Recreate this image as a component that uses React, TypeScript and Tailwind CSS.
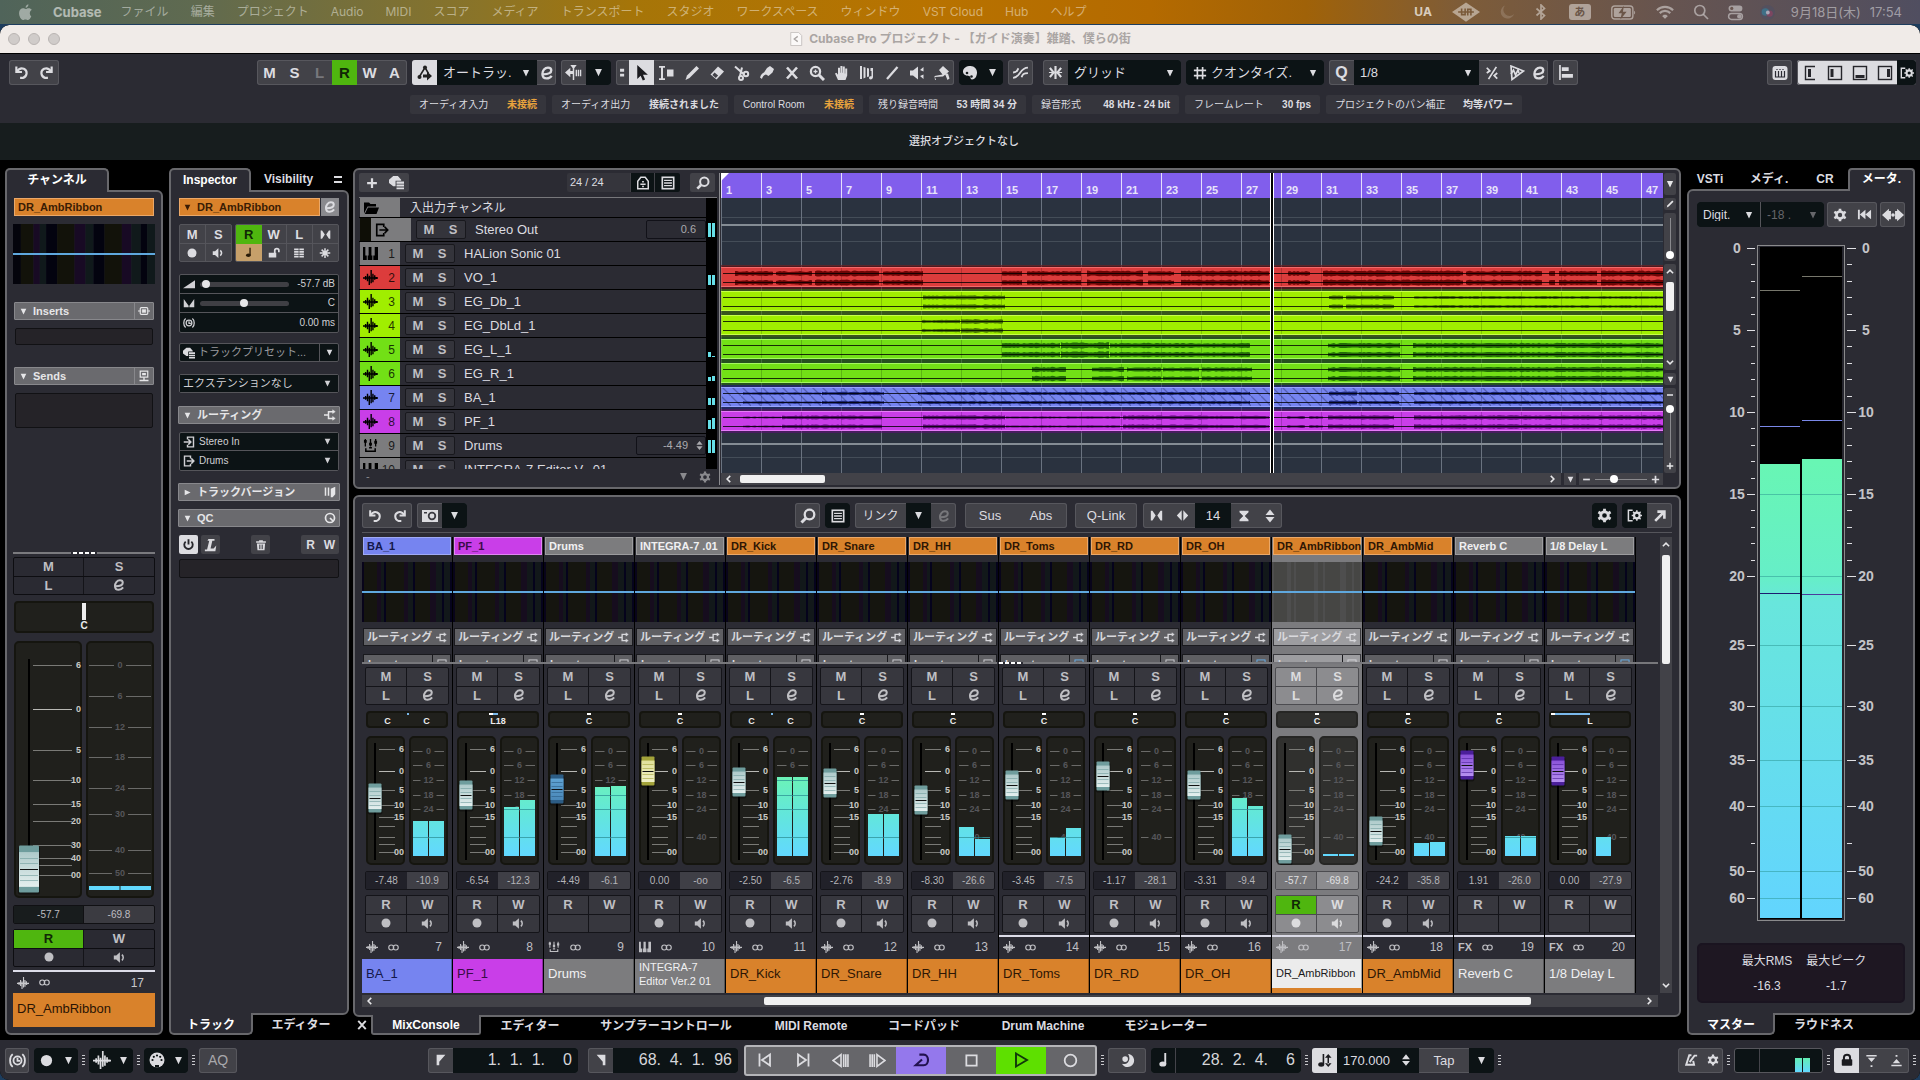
import React from "react";

/* ---------- icons (16 x 16 grid) ---------- */

const line = { fill: "none", stroke: "currentColor", strokeWidth: 2.3 } as const;
const thin = { fill: "none", stroke: "currentColor", strokeWidth: 1.4 } as const;

const ICONS: Record<string, React.ReactNode> = {
  undo: (
    <g {...line}>
      <path d="M2.500 1.500v6h6" />
      <path d="M3 7C5 4 8 3 10.500 4c4.200 1.800 4 8-1 9.800H6.500" />
    </g>
  ),
  redo: (
    <g {...line}>
      <path d="M13.500 1.500v6h-6" />
      <path d="M13 7C11 4 8 3 5.500 4c-4.200 1.800-4 8 1 9.800h3" />
    </g>
  ),
  e: (
    <path
      {...line}
      d="M4 9.300c3.500 0 8.300-1 8.300-4C12.300 3.400 10.600 2.600 9 2.600 5.800 2.600 3.400 5.800 3.400 9c0 2.900 1.800 4.400 4.300 4.400 2 0 3.800-.9 5-2.600"
    />
  ),
  down: <path d="M3 3h10l-5 10.500z" fill="currentColor" />,
  right: <path d="M3 3v10l10.500-5z" fill="currentColor" />,
  updown: <path d="M3.500 7L8 1.500 12.500 7zM3.500 9L8 14.500 12.500 9z" fill="currentColor" />,
  automation: (
    <g>
      <path d="M2.500 11.500L8 2.500l3.500 6" fill="none" stroke="currentColor" strokeWidth="1.600" />
      <circle cx="2.500" cy="12" r="2" fill="currentColor" />
      <circle cx="8" cy="2.500" r="2" fill="currentColor" />
      <path d="M6 9.500h4V6.500l5 4.500-5 4.500v-3H6z" fill="currentColor" />
    </g>
  ),
  autoscroll: (
    <g fill="currentColor">
      <path d="M0 8l5-4.500v3h3v3H5v3zM5 1h6L8.700 4v11H7.300V4z" />
      <path d="M10 5.500h1.300v6H10zM12 5.500h1.300v6H12zM14 5.500h1.300v6H14z" />
    </g>
  ),
  dots2: <path d="M5 3.500h5v3.500H5zM5 9.500h5V13H5z" fill="currentColor" />,
  arrow: <path d="M4 1v13l3.200-3 2 4.500 2.200-1-2-4.300H14z" fill="currentColor" />,
  range: (
    <g fill="currentColor">
      <path d="M0 1h6v1.700H4v10.600h2V15H0v-1.700h2V2.700H0z" />
      <path d="M8 4.500h6.500v7H8z" />
    </g>
  ),
  pencil: <path d="M12.500 1L15 3.500 5.500 13 1.500 15 3 10.500z" fill="currentColor" />,
  eraser: (
    <g>
      <path d="M9 1.500l6 5-7.500 8-6-5z" fill="currentColor" />
      <path d="M5.500 7.500l3.600 3-2.300 2.400-3.400-2.900z" fill="#43434a" />
    </g>
  ),
  scissors: (
    <g {...line} strokeWidth="2">
      <path d="M1 1.500L9.500 9M8 2.500L6 11" />
      <circle cx="12" cy="9" r="2.200" />
      <circle cx="7" cy="13" r="2" />
    </g>
  ),
  glue: <path d="M1 12.500c1-3 2-4 4-5L8 3l3-2 4 3-1.500 3.500L9.500 11 7 9.500C5 10 3.500 11.500 3 14z" fill="currentColor" />,
  cross: <path {...line} strokeWidth="2.600" d="M3 2.500l10 11M13 2.500L3 13.500" />,
  zoom: (
    <g {...line}>
      <circle cx="6.500" cy="6.500" r="4.600" />
      <path d="M10 10l5 5" strokeWidth="3" />
      <path d="M4.500 6.500h4M6.500 4.500v4" strokeWidth="1.300" />
    </g>
  ),
  hand: (
    <path
      d="M4 15l-3-6.500 1.500-.8 1.500 2V2.800h2v5h.4V1h2v6.800h.4V1.500h2V8.500h.4V3.500h2v7L11.500 15z"
      fill="currentColor"
    />
  ),
  warp: (
    <path d="M1 1h2v13H1zM4.500 2l2 .5v10l-2 1zM8 3l2 .5v8L8 12zM11.500 3h2.500v9c0 3-4 3-4 1 0-1.400 1-1.800 2.500-1.800V6h-1z" fill="currentColor" />
  ),
  linetool: <path {...line} d="M13.500 2L3 14" />,
  speaker: (
    <g fill="currentColor">
      <path d="M1 5.500h3L9 1.500v13L4 10.500H1z" />
      <path d="M11 5l3.500-3v4.500zM11 11l3.500 3V9.500z" />
    </g>
  ),
  bucket: <path d="M5 5l4-4 6 5.500-6 5L1 12l1 3H1L.5 11l8-1.500zM11 9l3-.5 1.500 5-2 1.500z" fill="currentColor" />,
  palette: (
    <g>
      <path d="M1 6.500C1 3 4.500 1 8.500 1S15 4 15 7.500c0 3-1.500 7-5 7-2 0-1-3-3-3.500S1 10.500 1 6.500z" fill="currentColor" />
      <circle cx="5" cy="8" r="1.300" fill="#1a1f20" />
      <circle cx="9.500" cy="11.500" r="1.300" fill="#1a1f20" />
    </g>
  ),
  crossfade: (
    <g {...line} strokeWidth="1.700">
      <path d="M1 13c7 0 6-9.500 14-9.500" />
      <path d="M1 8c4 0 4-2 5-4M9 12.500c1-3 2-4 6-4" />
    </g>
  ),
  snap: (
    <g {...line}>
      <path d="M8 1v14M2 3l4 5-4 5M14 3l-4 5 4 5" strokeWidth="2.300" />
      <path d="M1 8h14" strokeWidth="1.300" />
    </g>
  ),
  grid: <path {...line} strokeWidth="1.900" d="M5 1v14M11 1v14M1 5h14M1 11h14" />,
  percent: <path {...line} strokeWidth="2" d="M13 1L4 15M2 2l3.500 3.500L2 8M14 8l-3.500 3L14 14.500" />,
  quantwave: (
    <g {...line} strokeWidth="1.700">
      <path d="M2 1l12.500 5L3 14.500z" />
      <path d="M2 9l2.500-4 2 5L9 5l1 3" />
    </g>
  ),
  align: <path d="M2 1h1.600v14H2zM4.500 3H11v3.500H4.500zM4.500 9.500H15V13H4.500z" fill="currentColor" />,
  keyboard: (
    <g>
      <rect x="0.500" y="1" width="15" height="14" rx="3" fill="currentColor" />
      <path d="M3.500 6v6h9V6M6.500 6v6M9.500 6v6M5 4v1M8 4v1M11 4v1" stroke="#2b2b33" strokeWidth="1.200" fill="none" />
    </g>
  ),
  zoneL: (
    <g>
      <path d="M13 1.500H3.500v13H13" {...thin} />
      <path d="M6 4h3v8H6z" fill="currentColor" />
    </g>
  ),
  zoneA: (
    <g>
      <rect x="1.500" y="1.500" width="13" height="13" {...thin} />
      <path d="M3.500 4h3v8h-3z" fill="currentColor" />
    </g>
  ),
  zoneB: (
    <g>
      <rect x="1.500" y="1.500" width="13" height="13" {...thin} />
      <path d="M3.500 10h9v3h-9z" fill="currentColor" />
    </g>
  ),
  zoneC: (
    <g>
      <rect x="1.500" y="1.500" width="13" height="13" {...thin} />
      <path d="M10 4h3v8h-3z" fill="currentColor" />
    </g>
  ),
  panelgear: (
    <g>
      <path d="M6 2.500H1.500v11H6" {...line} strokeWidth="1.600" />
      <circle cx="10.500" cy="8" r="3" {...line} strokeWidth="2.300" />
      <path d="M10.500 2.500v2M10.500 11.500v2M5 8h2M14 8h2M6.500 4l1.500 1.500M13 10.500l1.500 1.500M14.500 4L13 5.500M8 10.500L6.500 12" stroke="currentColor" strokeWidth="1.600" />
    </g>
  ),
  gear: (
    <g>
      <circle cx="8" cy="8" r="4" {...line} strokeWidth="3" />
      <path
        d="M8 .8v3M8 12.200v3M1.500 4.300l2.600 1.500M11.900 10.200l2.600 1.500M1.500 11.700l2.600-1.500M11.900 5.800l2.600-1.500"
        stroke="currentColor"
        strokeWidth="3"
      />
    </g>
  ),
  plus: <path {...line} strokeWidth="3" d="M8 1.500v13M1.500 8h13" />,
  minus: <path {...line} strokeWidth="3" d="M2 8h12" />,
  preset: (
    <g fill="currentColor">
      <path d="M4.500 1h5L13 5v1H7v6H4.500L0 8.500V5z" />
      <path d="M8 7h8v2.200H8zM8 10.200h8v2H8zM8 13.200h8v2H8z" />
    </g>
  ),
  visible: (
    <g>
      <path d="M2 14.500V6l3.500-4.500h5L14 6v8.500z" {...line} strokeWidth="1.700" />
      <path d="M5 9.500h2M9 9.500h2M7 6.500h2M7 12h2M7 9.500h2" stroke="currentColor" strokeWidth="1.600" />
    </g>
  ),
  list: (
    <g>
      <rect x="1.500" y="1.500" width="13" height="13" {...line} strokeWidth="1.900" />
      <path d="M3.500 5h9M3.500 8h9M3.500 11h9" stroke="currentColor" strokeWidth="1.600" />
    </g>
  ),
  search: (
    <g {...line}>
      <circle cx="9.500" cy="6.500" r="4.800" />
      <path d="M6 10l-4.500 4.500" strokeWidth="3" />
    </g>
  ),
  folder: <path d="M1 13.500V2.500h5L7.500 4H13v2.500H4.500zM5 7.500h11L13.500 14H1.800z" fill="currentColor" />,
  out: (
    <g {...line} strokeWidth="1.900">
      <path d="M10 4.500V1.500H2v13h8v-3" />
      <path d="M5 8h9M11 4.500L14.500 8 11 11.500" />
    </g>
  ),
  in: (
    <g {...line} strokeWidth="1.900">
      <path d="M6 4.500V1.500h8v13H6v-3" />
      <path d="M1 8h9M7 4.500L10.500 8 7 11.500" />
    </g>
  ),
  keys: <path d="M0 1h2.500v9H4v5H0zM5 15v-5h1V1h3v9h1v5zM11 15v-5h1.500V1H16v14z" fill="currentColor" />,
  wave: (
    <path
      d="M0 8.500h16M2.800 6.500v4M4.800 4v8M6.700 6v10M8.700 0v14M10.600 4v9M12.500 5.500v5M14.200 7.500v2"
      fill="none"
      stroke="currentColor"
      strokeWidth="1.500"
    />
  ),
  faders: (
    <g>
      <path d="M2.500 1v8M8 1v8M13.500 1v8" {...thin} />
      <path d="M1 2h3v3H1zM6.500 5h3v3h-3zM12 3h3v3h-3z" fill="currentColor" />
      <path d="M3 11v3h10v-3M6.500 10.500h3" {...line} strokeWidth="1.600" />
    </g>
  ),
  rec: <circle cx="8" cy="8" r="6" fill="currentColor" />,
  monitor: (
    <g>
      <path d="M1 5.500h3L8.500 1.500v13L4 10.500H1z" fill="currentColor" />
      <path d="M11 4.500c2 2 2 5 0 7" {...line} strokeWidth="2" />
    </g>
  ),
  note: (
    <g fill="currentColor">
      <path d="M9.300 1h1.900v11H9.300z" />
      <ellipse cx="7.800" cy="12" rx="3.500" ry="2.600" />
    </g>
  ),
  lockopen: (
    <g>
      <path d="M1 7.500h10V14H1z" fill="currentColor" />
      <path d="M9 8V4.500c0-3 5.500-3 5.500 0V7" {...line} />
    </g>
  ),
  lock: (
    <g>
      <rect x="2" y="7" width="12" height="7.500" rx="1" fill="currentColor" />
      <path d="M4.500 8V5c0-4 7-4 7 0v3" {...line} />
    </g>
  ),
  lanes: <path d="M1.500 2h6v2.400h-6zM8.500 2h6v2.400h-6zM1.500 5.300h6v2.400h-6zM8.500 5.300h6v2.400h-6zM1.500 8.600h6V11h-6zM8.500 8.600h6V11h-6zM1.500 12h6v2h-6zM8.500 12h6v2h-6z" fill="currentColor" />,
  star: <path {...line} strokeWidth="2" d="M8 1.500v13M1 8h14M3.500 3.500l9 9M12.500 3.500l-9 9" />,
  bow: <path d="M1 2h2l4 6-4 6H1zM15 2h-2L9 8l4 6h2z" fill="currentColor" />,
  ramp: <path d="M0 13.500L16 3v10.500z" fill="currentColor" />,
  pan: <path d="M1 13.500V2.500l6.500 9v2zM15 13.500V2.500l-6.500 9v2z" fill="currentColor" />,
  delay: (
    <g {...line} strokeWidth="1.700">
      <circle cx="8" cy="8" r="3.800" />
      <path d="M8 5.500V8.400h2.500M3.500 2C.2 4.500.2 11.500 3.500 14M12.500 2c3.300 2.500 3.300 9.500 0 12" />
    </g>
  ),
  routing: (
    <g {...line} strokeWidth="2">
      <path d="M0 8h6M12 3.500H6v9h6" />
      <path d="M11.500 1L15 3.500 11.500 6zM11.500 10l3.500 2.500-3.500 2.500z" fill="currentColor" strokeWidth=".6" />
    </g>
  ),
  insert: (
    <g {...line} strokeWidth="1.600">
      <rect x="3" y="3.500" width="10" height="9" rx="1.500" />
      <path d="M0 8h3M13 8h3" />
      <path d="M5.500 6h5v4h-5z" fill="currentColor" strokeWidth=".5" />
    </g>
  ),
  send: (
    <g>
      <rect x="3" y="1.500" width="10" height="8" {...line} strokeWidth="1.600" />
      <path d="M5.500 4h5v3h-5z" fill="currentColor" />
      <path d="M8 9.500v4M2 14h12" {...line} strokeWidth="1.800" />
    </g>
  ),
  versions: <path d="M1 2h2v11H1zM5 2h2v11H5zM9 3.500L15 1v10l-3.500 4H9z" fill="currentColor" />,
  qc: (
    <g {...line}>
      <circle cx="8" cy="8" r="6" />
      <path d="M8 8l4 4" />
    </g>
  ),
  power: (
    <g {...line}>
      <path d="M4.500 4.500a5.200 5.200 0 1 0 7 0" />
      <path d="M8 1.500V8" />
    </g>
  ),
  learn: <path d="M5 1h7v2H9.500L7.500 12H11l3-3.500-1 6.500H1v-2h2.500L6 3H4z" fill="currentColor" />,
  trash: (
    <g>
      <path d="M1.500 3h4V1.500h5V3h4v2h-13zM2.500 6h11l-.8 9H3.300z" fill="currentColor" />
      <path d="M6 7.500v6M8 7.500v6M10 7.500v6" stroke="#43434a" strokeWidth="1" />
    </g>
  ),
  stereo: (
    <g {...line} strokeWidth="1.700">
      <circle cx="4.700" cy="8" r="3.600" />
      <circle cx="11.300" cy="8" r="3.600" />
    </g>
  ),
  camera: (
    <g>
      <path d="M0 2h16v12H0z" fill="currentColor" />
      <circle cx="10" cy="8" r="3.300" fill="none" stroke="#3c3c43" strokeWidth="1.800" />
      <path d="M2 4h3v1.500H2z" fill="#3c3c43" />
    </g>
  ),
  widen: <path d="M1 2h2l4 6-4 6H1zM15 2h-2L9 8l4 6h2z" fill="currentColor" />,
  narrow: <path d="M7 1.500v13L1 8zM9 1.500v13L15 8z" fill="currentColor" />,
  hourglass: <path d="M2 1h12v2L9 8l5 5v2H2v-2l5-5-5-5z" fill="currentColor" />,
  popout: <path {...line} strokeWidth="3" d="M2.500 13.500L12 4M5 3h8v8" />,
  rewind: <path d="M1 3h2v10H1zM9 3v10L3 8zM15 3v10L9 8z" fill="currentColor" />,
  stereoArrows: (
    <g fill="currentColor">
      <path d="M0 8l5-4.500v9zM16 8l-5-4.500v9zM5 5h1.500v6H5zM9.500 5H11v6H9.500z" />
      <circle cx="8" cy="8" r="1.300" />
    </g>
  ),
  midi: (
    <g>
      <circle cx="8" cy="8" r="7.500" fill="currentColor" />
      <g fill="#0c1314">
        <circle cx="3.500" cy="8" r="1.100" />
        <circle cx="4.800" cy="4.800" r="1.100" />
        <circle cx="8" cy="3.500" r="1.100" />
        <circle cx="11.200" cy="4.800" r="1.100" />
        <circle cx="12.500" cy="8" r="1.100" />
        <path d="M6 13h4v2.500H6z" />
      </g>
    </g>
  ),
  locL: <path d="M3 2h10L6 10v4H3z" fill="currentColor" />,
  locR: <path d="M3 2h10v12h-3v-4z" fill="currentColor" />,
  toStart: <path {...line} strokeWidth="1.800" d="M2.500 1.500v13M13 2.500v11L5 8z" />,
  toEnd: <path {...line} strokeWidth="1.800" d="M13.500 1.500v13M3 2.500v11L11 8z" />,
  back: <path {...line} strokeWidth="1.500" d="M8.500 2.500v11L1 8zM11 2v12M13 2v12M15 2v12" />,
  fwd: <path {...line} strokeWidth="1.500" d="M7.500 2.500v11L15 8zM1 2v12M3 2v12M5 2v12" />,
  cycle: <path {...line} strokeWidth="2" d="M6 2.500h4c5.500 0 5.500 10 0 10H2.500L8.500 7" />,
  stop: <path {...line} strokeWidth="1.900" d="M2.500 2.500h11v11h-11z" />,
  play: <path {...line} strokeWidth="1.900" d="M3 1.500v13L14 8z" />,
  record: <circle {...line} strokeWidth="1.900" cx="8" cy="8" r="6.200" />,
  punch: (
    <g fill="currentColor">
      <path d="M8.500 1a7 7 0 1 1-6.500 10.500C8 13.500 12.500 6.500 8.500 1z" />
      <circle cx="5.500" cy="6.500" r="3" />
    </g>
  ),
  tempo: (
    <g fill="currentColor">
      <path d="M6 1h1.700v11H6z" />
      <ellipse cx="4.500" cy="12.200" rx="3.200" ry="2.400" />
      <path d="M12 1l3.500 4h-7zM12 15l3.500-4h-7zM11.200 4h1.600v8h-1.600z" />
    </g>
  ),
  metronome: <path {...line} strokeWidth="2.200" d="M8.500 2.500h-2.500L2.500 13.500h9L10.500 9M6.500 10.500L12 3h3" />,
  punchIn: <path d="M2.500 2h11v1.600h-11zM4 5h8l-4 4.500zM7 13h2v2H7z" fill="currentColor" />,
  punchOut: <path d="M2.500 12.400h11V14h-11zM4 11h8L8 6.500zM7 2h2v2H7z" fill="currentColor" />,
  apple: (
    <path
      d="M12.500 11.500c-.8 2-2 3.500-3.200 3.500-1 0-1.200-.5-2.300-.5s-1.400.5-2.300.5C2.800 15 1 11.500 1 8.500c0-3 2-4.500 3.700-4.500 1.100 0 1.700.6 2.600.6.800 0 1.500-.7 2.900-.7 1 0 2.200.6 2.800 1.500-2.600 1.500-2.200 5-.5 6.100zM7.200 3.500C7 2 8.300.5 9.800.2c.2 1.600-1 3.200-2.600 3.300z"
      fill="currentColor"
    />
  ),
  uaLogo: (
    <g>
      <path d="M0 8l8-5.500L16 8l-8 5.500z" fill="currentColor" />
      <path d="M5.500 6v3.500h2V6M9 10V6.500h1.800V10M3.500 8h9" stroke="#7a5a3a" strokeWidth=".9" fill="none" />
    </g>
  ),
  moon: <path d="M6 1.500A6.800 6.800 0 1 0 15 10 6 6 0 0 1 6 1.500z" fill="currentColor" />,
  bluetooth: <path {...thin} strokeWidth="1.700" d="M3.500 4.500l8 7L8 15V1l3.500 3.500-8 7" />,
  battery: (
    <g>
      <rect x=".5" y="3.800" width="13.500" height="8.400" rx="1.800" {...thin} strokeWidth=".9" />
      <rect x="1.800" y="5.100" width="10.900" height="5.800" rx=".8" fill="currentColor" />
      <path d="M14.800 6.800v2.400c.9-.3.900-2.100 0-2.400z" fill="currentColor" />
      <path d="M8.300 3.600L4.800 8.500h2.100l-.9 4 4-5H7.600z" fill="#6b5648" />
    </g>
  ),
  wifi: (
    <g {...line} strokeWidth="1.900">
      <path d="M.8 6.500c4-4 10.400-4 14.400 0M3.300 9c2.600-2.600 6.800-2.600 9.400 0" />
      <path d="M5.800 11.500c1.200-1.200 3.200-1.200 4.400 0L8 13.800z" fill="currentColor" strokeWidth=".5" />
    </g>
  ),
  magnify: (
    <g {...line} strokeWidth="1.700">
      <circle cx="6.800" cy="6.500" r="5" />
      <path d="M10.500 10.500l4.500 4.500" />
    </g>
  ),
  control: (
    <g>
      <rect x="1.500" y="1.500" width="13" height="5.500" rx="2.700" fill="currentColor" />
      <rect x="1.500" y="9" width="13" height="5.500" rx="2.700" {...thin} />
      <circle cx="11.500" cy="11.700" r="2" fill="currentColor" />
      <circle cx="4.500" cy="4.200" r="1.500" fill="#6a5650" />
    </g>
  ),
  siri: (
    <g>
      <circle cx="8" cy="8" r="7" fill="#54505e" />
      <circle cx="6" cy="7.500" r="3.500" fill="#3f6f86" />
      <circle cx="10" cy="9" r="3" fill="#7c4660" />
      <circle cx="8.300" cy="8" r="1.800" fill="#a8a8b8" />
    </g>
  ),
  doc: (
    <g>
      <path d="M2 .5h9l3.500 3.500v11.500H2z" fill="#fbf9f8" stroke="#c4bfbd" />
      <path d="M10 5L6 8l4 3" {...line} strokeWidth="1.500" />
    </g>
  ),
};

function Icon({ name, size = 16, className = "" }: { name: string; size?: number; className?: string }) {
  return (
    <svg viewBox="0 0 16 16" width={size} height={size} className={"shrink-0 " + className} aria-hidden="true">
      {ICONS[name]}
    </svg>
  );
}

/* ---------- small controls ---------- */

function Btn({
  icon,
  label,
  text,
  size = 14,
  className = "",
}: {
  icon?: string;
  label: string;
  text?: string;
  size?: number;
  className?: string;
}) {
  return (
    <button type="button" aria-label={label} className={"flex items-center justify-center " + className}>
      {icon ? <Icon name={icon} size={size} /> : text}
    </button>
  );
}

function Group({ children, className = "" }: { children: React.ReactNode; className?: string }) {
  return (
    <div
      className={
        "flex h-[25px] shrink-0 items-stretch overflow-hidden rounded-[3px] bg-[#424248] text-[#dcdce0] ring-1 ring-[#57575d] ring-inset " +
        className
      }
    >
      {children}
    </div>
  );
}

function Select({
  value,
  label,
  className = "",
  pad = "pl-[6px]",
  arrow = 10,
}: {
  value: string;
  label: string;
  className?: string;
  pad?: string;
  arrow?: number;
}) {
  return (
    <div className={"relative flex items-center bg-[#0c1315] " + className}>
      <select
        aria-label={label}
        defaultValue={value}
        className={"h-full w-full appearance-none truncate bg-transparent pr-4 outline-none " + pad}
      >
        <option>{value}</option>
      </select>
      <Icon name="down" size={arrow} className="pointer-events-none absolute right-[6px]" />
    </div>
  );
}

function Drop({ label, className = "w-[25px]" }: { label: string; className?: string }) {
  return <Btn icon="down" size={11} label={label} className={"bg-[#0c1315] " + className} />;
}

function Grip() {
  return (
    <div className="flex w-[11px] shrink-0 flex-col items-center justify-center gap-[2px]">
      <i className="h-px w-[3px] bg-[#c8c8cc]" />
      <i className="h-px w-[3px] bg-[#c8c8cc]" />
      <i className="h-px w-[3px] bg-[#c8c8cc]" />
      <i className="h-px w-[3px] bg-[#c8c8cc]" />
    </div>
  );
}

const PANEL = "border-2 border-[#68686c] bg-[#2b2b33]";

/* ---------- top of the window ---------- */

const MENUS = [
  "ファイル", "編集", "プロジェクト", "Audio", "MIDI", "スコア", "メディア", "トランスポート",
  "スタジオ", "ワークスペース", "ウィンドウ", "VST Cloud", "Hub", "ヘルプ",
];

function MenuBar() {
  return (
    <nav className="flex h-[24px] items-center bg-[linear-gradient(90deg,#50645a_0%,#5f6a50_10%,#8a7428_25%,#a67508_33%,#b87300_48%,#b46a00_60%,#a06208_68%,#7e5c38_76%,#665450_87%,#504e60_100%)] font-['Inter','Noto_Sans_CJK_JP',sans-serif] text-[12px] text-white/45">
      <Icon name="apple" size={17} className="ml-[18px]" />
      <button type="button" className="ml-[18px] text-[13px] font-bold text-white/55">Cubase</button>
      <div className="ml-[19px] flex gap-[22px]">
        {MENUS.map((m) => (
          <button type="button" key={m} className="whitespace-nowrap">{m}</button>
        ))}
      </div>
      <div className="ml-auto flex items-center pr-[18px]">
        <span className="mr-[20px] font-bold text-white/70">UA</span>
        <Icon name="uaLogo" size={28} className="mr-[19px]" />
        <Icon name="moon" size={16} className="mr-[18px] text-white/15" />
        <Icon name="bluetooth" size={16} className="mr-[20px]" />
        <span className="mr-[20px] flex h-[16px] w-[22px] items-center justify-center rounded-[3px] bg-white/45 text-[11px] font-bold text-[#6b5648]">あ</span>
        <Icon name="battery" size={25} className="mr-[20px]" />
        <Icon name="wifi" size={18} className="mr-[19px]" />
        <Icon name="magnify" size={16} className="mr-[18px]" />
        <Icon name="control" size={17} className="mr-[15px]" />
        <Icon name="siri" size={17} className="mr-[15px]" />
        <span className="mr-[9px] text-[13px] whitespace-nowrap">9月18日(木)</span>
        <span className="text-[13px]">17:54</span>
      </div>
    </nav>
  );
}

function TitleBar() {
  return (
    <header className="relative flex h-[29px] items-center justify-center rounded-t-[9px] border-b border-black bg-[#f0ebe8] font-['Inter','Noto_Sans_CJK_JP',sans-serif] text-[12px] font-bold text-[#aaa5a3]">
      <div className="absolute left-[8px] flex gap-[8px]">
        <button type="button" aria-label="閉じる" className="h-[12px] w-[12px] rounded-full border border-[#b9b5b3] bg-[#d0ccca]" />
        <button type="button" aria-label="しまう" className="h-[12px] w-[12px] rounded-full border border-[#b9b5b3] bg-[#d0ccca]" />
        <button type="button" aria-label="拡大" className="h-[12px] w-[12px] rounded-full border border-[#b9b5b3] bg-[#d0ccca]" />
      </div>
      <Icon name="doc" size={14} className="mr-[6px]" />
      <h1 className="whitespace-pre">Cubase Pro プロジェクト - 【ガイド演奏】雑踏、僕らの街</h1>
    </header>
  );
}

const TOOLS: [string, string][] = [
  ["range", "範囲選択"], ["pencil", "鉛筆"], ["eraser", "消しゴム"], ["scissors", "はさみ"], ["glue", "のり"],
  ["cross", "ミュート"], ["zoom", "ズーム"], ["hand", "コンプ"], ["warp", "タイムワープ"], ["linetool", "ライン"],
  ["speaker", "再生"], ["bucket", "カラー"],
];

function Toolbar() {
  return (
    <div className="flex h-[41px] items-start bg-[#2b2b33] pt-[6px] pr-[4px] pl-[9px] text-[13px] text-[#e0e0e4]">
      <Group>
        <Btn icon="undo" size={15} label="元に戻す" className="w-[25px]" />
        <Btn icon="redo" size={15} label="再実行" className="w-[25px]" />
      </Group>
      <Group className="ml-[198px] text-[15px] font-bold">
        <Btn text="M" label="ミュート" className="w-[25px]" />
        <Btn text="S" label="ソロ" className="w-[25px]" />
        <Btn text="L" label="リッスン" className="w-[25px] text-[#77777c]" />
        <Btn text="R" label="読み込み" className="w-[25px] bg-[#4fb60f] text-[#102806]" />
        <Btn text="W" label="書き込み" className="w-[25px]" />
        <Btn text="A" label="全オートメーション" className="w-[25px]" />
      </Group>
      <Group className="ml-[5px]">
        <Btn icon="automation" size={16} label="オートメーションパネル" className="w-[25px] bg-[#dcdce0] text-[#222]" />
        <Select value="オートラッ." label="オートメーションモード" className="w-[100px]" />
        <Btn icon="e" size={16} label="設定" className="w-[19px]" />
      </Group>
      <Group className="ml-[5px]">
        <Btn icon="autoscroll" size={17} label="オートスクロール" className="w-[25px]" />
        <Drop label="スクロール設定" />
      </Group>
      <Group className="ml-[5px]">
        <Btn icon="dots2" size={13} label="ツール表示" className="w-[13px]" />
        <Btn icon="arrow" size={17} label="選択" className="w-[25px] bg-[#dcdce0] text-[#1b1b1f]" />
        {TOOLS.map(([i, l]) => (
          <Btn key={i} icon={i} size={16} label={l} className="w-[25px]" />
        ))}
      </Group>
      <Group className="ml-[5px]">
        <Btn icon="palette" size={16} label="カラー" className="w-[22px] bg-[#0c1315]" />
        <Drop label="カラーメニュー" className="w-[22px]" />
      </Group>
      <Group className="ml-[5px]">
        <Btn icon="crossfade" size={17} label="ゼロクロス" className="w-[25px]" />
      </Group>
      <Group className="ml-[10px]">
        <Btn icon="snap" size={15} label="スナップ" className="w-[25px]" />
        <Select value="グリッド" label="スナップタイプ" className="w-[113px]" />
      </Group>
      <Group className="ml-[5px]">
        <Btn icon="grid" size={14} label="グリッドタイプ" className="w-[25px] bg-[#0c1315] pl-[2px]" />
        <Select value="クオンタイズ." label="グリッド" className="w-[113px]" pad="pl-0" />
      </Group>
      <Group className="ml-[5px]">
        <Btn text="Q" label="クオンタイズ" className="w-[25px] text-[16px] font-bold" />
        <Select value="1/8" label="クオンタイズ値" className="w-[125px]" />
        <Btn icon="percent" size={14} label="ソフトクオンタイズ" className="w-[25px]" />
        <Btn icon="quantwave" size={16} label="オーディオクオンタイズ" className="w-[25px]" />
        <Btn icon="e" size={16} label="クオンタイズ設定" className="w-[19px]" />
      </Group>
      <Group className="ml-[5px]">
        <Btn icon="align" size={17} label="整列" className="w-[25px]" />
      </Group>
      <Group className="ml-auto">
        <Btn icon="keyboard" size={16} label="オンスクリーンキーボード" className="w-[25px]" />
      </Group>
      <Group className="ml-[5px] bg-[#dcdce0]">
        <Btn icon="zoneL" size={16} label="左ゾーン" className="w-[25px] text-[#26262b]" />
        <Btn icon="zoneA" size={16} label="インスペクター" className="w-[25px] text-[#26262b]" />
        <Btn icon="zoneB" size={16} label="下ゾーン" className="w-[25px] text-[#26262b]" />
        <Btn icon="zoneC" size={16} label="右ゾーン" className="w-[25px] text-[#26262b]" />
        <Btn icon="panelgear" size={14} label="レイアウト設定" className="w-[19px] bg-[#0c1315]" />
      </Group>
    </div>
  );
}

const STATUS: { k: string; v: string; w: string; warn?: boolean }[] = [
  { k: "オーディオ入力", v: "未接続", w: "w-[136px]", warn: true },
  { k: "オーディオ出力", v: "接続されました", w: "w-[176px]" },
  { k: "Control Room", v: "未接続", w: "w-[129px]", warn: true },
  { k: "残り録音時間", v: "53 時間 34 分", w: "w-[157px]" },
  { k: "録音形式", v: "48 kHz - 24 bit", w: "w-[147px]" },
  { k: "フレームレート", v: "30 fps", w: "w-[135px]" },
  { k: "プロジェクトのパン補正", v: "均等パワー", w: "w-[196px]" },
];

function StatusLine() {
  return (
    <div className="flex h-[28px] items-start justify-center gap-[6px] bg-[#2b2b33] pl-[12px] text-[10px] text-[#dcdce0]">
      {STATUS.map((s) => (
        <div key={s.k} className={"flex h-[19px] items-center justify-between rounded-[2px] bg-[#35353c] px-[9px] whitespace-nowrap " + s.w}>
          <span>{s.k}</span>
          <b className={s.warn ? "text-[#e8a33d]" : ""}>{s.v}</b>
        </div>
      ))}
    </div>
  );
}

/* ---------- equaliser curve ---------- */

const STRIPES: [number, number, string][] = [
  [0, 2, "#08041a"], [2, 13, "#15150f"], [15, 4, "#160d1e"], [19, 3, "#12181a"], [22, 2, "#05031c"], [24, 18, "#15150f"],
  [42, 4, "#160d1e"], [46, 5, "#12181a"], [51, 2, "#05031c"], [53, 15, "#15150f"], [68, 6, "#160d1e"], [74, 6, "#12181a"],
  [80, 2, "#05031c"], [82, 6, "#12181a"], [88, 3, "#05031c"],
];

const WIDE_STRIPES: [number, number, string][] = [
  [0, 5, "#04040c"], [5, 8, "#12120a"], [13, 4, "#180a24"], [17, 4, "#10191b"], [21, 7, "#03030f"], [28, 11, "#12120a"],
  [39, 7, "#180a24"], [46, 5, "#10191b"], [51, 7, "#03030f"], [58, 11, "#12120a"], [69, 6, "#180a24"], [75, 6, "#10191b"],
  [81, 4, "#03030f"], [85, 5, "#10191b"],
];

function Curve({ selected = false, wide = false }: { selected?: boolean; wide?: boolean }) {
  return (
    <svg viewBox="0 0 90 60" preserveAspectRatio="none" className="block h-[60px] w-full" aria-hidden="true">
      {selected ? (
        <>
          <rect width="90" height="60" fill="#484846" />
          {STRIPES.map(([x, w], i) => (
            <rect key={i} x={x} width={w} height="60" fill={i % 2 ? "#464644" : "#4e4e4e"} />
          ))}
        </>
      ) : (
        (wide ? WIDE_STRIPES : STRIPES).map(([x, w, c]) => <rect key={x} x={x} width={w} height="60" fill={c} />)
      )}
      <rect y="29" width="90" height="2" fill="#5fa8de" />
    </svg>
  );
}

/* ---------- fader and meter ---------- */

type Scale = {
  h: number;
  fw: number;
  mw: number;
  slot: number;
  tick: [number, number];
  font: number;
  top: number;
  bottom: number;
  marks: [number, string][];
  meter: [number, string][];
  cap: [number, number];
  barX: number;
};

const SMALL: Scale = {
  h: 129, fw: 39, mw: 39, slot: 9, tick: [13, 29], font: 9, top: 7, bottom: 120,
  marks: [[13, "6"], [35, "0"], [54, "5"], [69, "10"], [81, "15"], [90, ""], [101, ""], [108, ""], [116, "00"]],
  meter: [[15, "0"], [29, "6"], [44, "12"], [59, "18"], [73, "24"], [101, "40"]],
  cap: [13, 29], barX: 4,
};

const LARGE: Scale = {
  h: 257, fw: 68, mw: 68, slot: 15, tick: [19, 58], font: 9, top: 18, bottom: 249,
  marks: [[24, "6"], [68, "0"], [109, "5"], [139, "10"], [163, "15"], [180, "20"], [204, "30"], [217, "40"], [224, ""], [234, "00"]],
  meter: [[24, "0"], [55, "6"], [86, "12"], [116, "18"], [147, "24"], [173, "30"], [209, "40"], [232, "50"]],
  cap: [20, 47], barX: 3,
};

const CAPS: Record<string, [string, string, string]> = {
  teal: ["#6f9d9d", "#aecaca", "#e4efee"],
  blue: ["#2c5c84", "#5fa3d4", "#4a88b8"],
  yellow: ["#a3a33a", "#e0e09a", "#f0f0c8"],
  purple: ["#4b1f9a", "#8a52d8", "#b690f0"],
};

function Fader({
  s, cap, pos, bars, label, selected = false,
}: {
  s: Scale; cap: string; pos: number; bars: [number, number]; label: string; selected?: boolean;
}) {
  const c = CAPS[cap];
  const [cw, ch] = s.cap;
  const cx = s.slot - cw / 2;
  const cy = pos - ch / 2;
  const bw = (s.mw - 2 * s.barX - 1) / 2;
  const id = "cap-" + label.replace(/\W/g, "");
  const bg = selected ? "#30302e" : "#20201c";
  const edge = selected ? "#262624" : "#15150f";
  return (
    <div className="flex justify-between">
      <div className="relative">
        <svg width={s.fw} height={s.h} className="block" aria-hidden="true">
          <defs>
            <linearGradient id={id} x1="0" y1="0" x2="0" y2="1">
              <stop offset="0" stopColor={c[1]} />
              <stop offset="1" stopColor={c[2]} />
            </linearGradient>
          </defs>
          <rect x="1" y="1" width={s.fw - 2} height={s.h - 2} rx="4" fill={bg} stroke={edge} strokeWidth="2" />
          <rect x={s.slot - 1} y={s.top} width="2" height={s.bottom - s.top + (s.h > 200 ? 2 : 4)} fill="#000" />
          {s.marks.map(([y, t]) => (
            <g key={y}>
              <rect x={s.tick[0]} y={y} width={s.tick[1] - s.tick[0]} height="1" fill={t === "0" ? "#b8b8b4" : "#7a7a76"} />
              {t ? <text x={s.fw - 1} y={y + 3} textAnchor="end" fontSize={s.font} fontWeight="700" fill="#c9c9c6">{t}</text> : null}
            </g>
          ))}
          <rect x={cx - 1} y={cy + 1} width={cw + 2} height={ch + 1} rx="2" fill="#000" opacity=".35" />
          <rect x={cx} y={cy} width={cw} height={ch} rx="1" fill={c[0]} />
          <rect x={cx} y={cy + ch * 0.14} width={cw} height={ch * 0.74} fill={"url(#" + id + ")"} />
          {[0.26, 0.38, 0.62, 0.74].map((f) => (
            <rect key={f} x={cx + 1} y={Math.round(cy + ch * f)} width={cw - 2} height="1" fill={c[0]} opacity=".6" />
          ))}
          <rect x={cx + 1} y={Math.round(pos)} width={cw - 2} height="1" fill="#111" />
        </svg>
        <input type="range" aria-label={label + " フェーダー"} className="absolute inset-0 h-full w-full cursor-pointer opacity-0" />
      </div>
      <svg width={s.mw} height={s.h} className="block" aria-hidden="true">
        <defs>
          <linearGradient id={id + "m"} gradientUnits="userSpaceOnUse" x1="0" y1={s.bottom} x2="0" y2={s.bottom - 82}>
            <stop offset="0" stopColor="#62d8ff" />
            <stop offset=".5" stopColor="#62e6dc" />
            <stop offset="1" stopColor="#6cf4b4" />
          </linearGradient>
        </defs>
        <rect x="1" y="1" width={s.mw - 2} height={s.h - 2} rx="4" fill={bg} stroke={edge} strokeWidth="2" />
        {s.meter.map(([y, t]) => {
          const gap = t.length > 1 ? 8 : 6;
          return (
            <g key={y}>
              <rect x={s.barX} y={y} width={s.mw / 2 - gap - s.barX} height="1" fill="#6a6a68" />
              <rect x={s.mw / 2 + gap} y={y} width={s.mw / 2 - gap - s.barX} height="1" fill="#6a6a68" />
              <text x={s.mw / 2} y={y + 3} textAnchor="middle" fontSize={s.font} fontWeight="700" fill="#56565a">{t}</text>
            </g>
          );
        })}
        {bars.map((b, i) =>
          b > 0 ? (
            <rect key={i} x={s.barX + i * (bw + 1)} y={s.bottom - b} width={bw} height={b} fill={"url(#" + id + "m)"} />
          ) : null,
        )}
        {s.meter.map(([y]) =>
          y > s.bottom - Math.max(...bars) ? (
            <rect key={y} x={s.barX} y={y} width={s.mw - 2 * s.barX} height="1" fill="#2a8c90" opacity=".7" />
          ) : null,
        )}
      </svg>
    </div>
  );
}

/* ---------- two-column button pads ---------- */

function Pad({ top, bottom, selected = false, dark = false }: { top: React.ReactNode; bottom: React.ReactNode; selected?: boolean; dark?: boolean }) {
  const tone = selected ? "bg-[#8c8c8f] border-[#4c4c50] divide-[#4c4c50] text-[#dcdcde]" : dark
    ? "bg-[#2a2a32] border-[#0d0d11] divide-[#0d0d11] text-[#bfbfc3]"
    : "bg-[#37373e] border-[#141419] divide-[#141419] text-[#bfbfc3]";
  const row = selected ? "divide-[#4c4c50]" : "divide-[#141419]";
  return (
    <div className={"flex h-[38px] flex-col divide-y rounded-[2px] border text-[13px] font-bold " + tone}>
      <div className={"grid flex-1 grid-cols-2 divide-x " + row}>{top}</div>
      <div className={"grid flex-1 grid-cols-2 divide-x " + row}>{bottom}</div>
    </div>
  );
}

const MuteSolo = (p: { selected?: boolean; dark?: boolean }) => (
  <Pad
    {...p}
    top={<><Btn text="M" label="ミュート" /><Btn text="S" label="ソロ" /></>}
    bottom={<><Btn text="L" label="リッスン" /><Btn icon="e" size={14} label="チャンネル設定" /></>}
  />
);

const ReadWrite = (p: { selected?: boolean; dark?: boolean; on?: boolean; rec?: boolean }) => (
  <Pad
    selected={p.selected}
    dark={p.dark}
    top={
      <>
        <Btn text="R" label="オートメーション読み込み" className={p.on ? "bg-[#4fb60f] text-[#102806]" : ""} />
        <Btn text="W" label="オートメーション書き込み" />
      </>
    }
    bottom={
      p.rec === false ? (
        <><span /><span /></>
      ) : (
        <><Btn icon="rec" size={12} label="録音可能" /><Btn icon="monitor" size={13} label="モニタリング" /></>
      )
    }
  />
);

/* ---------- left: channel panel ---------- */

function SectionHead({ title, icon, cell = false, open = true }: { title: string; icon: string; cell?: boolean; open?: boolean }) {
  return (
    <button
      type="button"
      className="flex h-[18px] w-full items-center rounded-[1px] border border-[#88888c] bg-[#6a6a6e] text-left text-[11px] font-bold text-[#e6e6e8]"
    >
      <Icon name={open ? "down" : "right"} size={9} className="mx-[4px]" />
      <span className="ml-[1px] flex-1">{title}</span>
      <span className={"flex h-full w-[19px] items-center justify-center " + (cell ? "border-l border-[#88888c]" : "")}>
        <Icon name={icon} size={12} />
      </span>
    </button>
  );
}

function ChannelPanel() {
  return (
    <section className="flex w-[158px] shrink-0 flex-col">
      <div className={"relative z-10 -mb-[2px] flex h-[24px] w-[104px] items-center justify-center rounded-t-[5px] border-b-0 pb-[3px] text-[12px] font-bold text-white " + PANEL}>
        チャンネル
      </div>
      <div className={"flex flex-1 flex-col rounded-[6px] rounded-tl-none px-[7px] pt-[6px] pb-[6px] " + PANEL}>
        <div className="flex h-[18px] items-center border border-[#eba868] bg-[#d9822b] px-[3px] text-[11px] font-bold text-[#3a1c04]">DR_AmbRibbon</div>
        <div className="-mx-px mt-[8px]"><Curve wide /></div>
        <div className="mt-[18px]"><SectionHead title="Inserts" icon="insert" cell /></div>
        <div className="mx-px mt-[8px] h-[17px] rounded-[2px] border border-[#111114] bg-[#252328]" />
        <div className="mt-[22px]"><SectionHead title="Sends" icon="send" cell /></div>
        <div className="mx-px mt-[8px] h-[35px] rounded-[2px] border border-[#111114] bg-[#252328]" />
        <div className="flex-1" />
        <div className="-mx-px">
          <div className="flex h-[2px] items-stretch justify-center bg-[#7a7a7e]">
            <div className="flex gap-[2px] bg-[#2b2b33] px-[2px]">
              <i className="w-[4px] bg-white" /><i className="w-[4px] bg-white" /><i className="w-[4px] bg-white" /><i className="w-[4px] bg-white" />
            </div>
          </div>
          <div className="mt-[3px]"><MuteSolo dark /></div>
        </div>
        <div className="mt-[6px] flex h-[32px] flex-col items-center rounded-[4px] border-2 border-[#15150f] bg-[#20201c]">
          <i className="h-[17px] w-[4px] bg-[#ececec]" />
          <span className="text-[10px] leading-[11px] font-bold text-[#ececec]">C</span>
        </div>
        <div className="mt-[8px]"><Fader s={LARGE} cap="teal" pos={228} bars={[4, 4]} label="AmbRibbonMain" /></div>
        <div className="-mx-px mt-[7px] grid h-[19px] grid-cols-2 divide-x divide-[#101013] rounded-[2px] border border-[#101013] bg-[#3b3b41] text-center text-[10px] leading-[17px] text-[#bdbdc1]">
          <span className="bg-[#181c1d]">-57.7</span><span>-69.8</span>
        </div>
        <div className="-mx-px mt-[5px]"><ReadWrite dark on /></div>
        <div className="-mx-px mt-[3px] h-[2px] bg-[#dcdce8]" />
        <div className="flex h-[21px] items-center px-[3px] text-[12px] text-[#c8c8cc]">
          <Icon name="wave" size={12} /><Icon name="stereo" size={11} className="ml-[10px]" />
          <span className="mr-[7px] ml-auto">17</span>
        </div>
        <div className="-mx-px flex h-[34px] items-center bg-[#d9822b] px-[4px] pb-[4px] text-[13px] text-[#2a1404]">DR_AmbRibbon</div>
      </div>
    </section>
  );
}

/* ---------- left: inspector ---------- */

const FIELD = "border border-[#55555a] bg-[#0c1315]";

function SliderRow({ icon, value, pos, label }: { icon: string; value: string; pos?: string; label: string }) {
  return (
    <div className="flex h-[19px] items-center px-[3px]">
      <Icon name={icon} size={12} />
      {pos ? (
        <div className="relative ml-[5px] h-[5px] w-[89px] rounded-full bg-[#3f3f44]">
          <span className={"absolute -top-[2px] h-[8px] w-[8px] -translate-x-1/2 rounded-full bg-[#e6e6e8] " + pos} />
          <input type="range" aria-label={label} className="absolute inset-0 h-full w-full opacity-0" />
        </div>
      ) : null}
      <span className="ml-auto text-[10px]">{value}</span>
    </div>
  );
}

function Inspector() {
  const pad = "border-[#55555b] bg-[#424248]";
  return (
    <section className="flex w-[180px] shrink-0 flex-col text-[#dcdce0]">
      <div className="relative z-10 -mb-[2px] flex h-[24px] items-center text-[12px] font-bold">
        <button type="button" className={"h-full w-[82px] rounded-t-[5px] border-b-0 pb-[3px] text-white " + PANEL}>Inspector</button>
        <button type="button" className="w-[75px] pb-[2px]">Visibility</button>
        <button type="button" aria-label="メニュー" className="ml-auto flex flex-col gap-[3px] pr-[7px] pb-[2px]">
          <i className="h-[2px] w-[8px] bg-[#dcdce0]" /><i className="h-[2px] w-[8px] bg-[#dcdce0]" />
        </button>
      </div>
      <div className={"flex flex-1 flex-col rounded-[6px] rounded-tl-none rounded-bl-none px-[8px] pt-[6px] " + PANEL}>
        <div className="flex h-[18px] gap-px">
          <button type="button" className="flex flex-1 items-center border border-[#eba868] bg-[#d9822b] text-[11px] font-bold text-[#3a1c04]">
            <Icon name="down" size={9} className="mx-[3px]" /><span className="ml-[2px]">DR_AmbRibbon</span>
          </button>
          <Btn icon="e" size={14} label="チャンネル設定を編集" className="w-[18px] border border-[#88888c] bg-[#8a8a8e]" />
        </div>
        <div className="mt-[8px] flex h-[38px] gap-[3px] text-[13px] font-bold">
          <div className={"grid w-[53px] grid-cols-2 rounded-[2px] border " + pad}>
            <Btn text="M" label="ミュート" className="border-r border-b border-[#55555b]" />
            <Btn text="S" label="ソロ" className="border-b border-[#55555b]" />
            <Btn icon="rec" size={12} label="録音可能" className="border-r border-[#55555b]" />
            <Btn icon="monitor" size={12} label="モニタリング" />
          </div>
          <div className={"grid flex-1 grid-cols-4 overflow-hidden rounded-[2px] border " + pad}>
            <Btn text="R" label="読み込み" className="bg-[#4fb60f] text-[#102806]" />
            <Btn text="W" label="書き込み" className="border-r border-b border-[#55555b]" />
            <Btn text="L" label="リッスン" className="border-r border-b border-[#55555b]" />
            <Btn icon="bow" size={11} label="ステレオ" className="border-b border-[#55555b]" />
            <Btn icon="note" size={11} label="タイムベース" className="bg-[#c6a06a] text-[#2a1c08]" />
            <Btn icon="lockopen" size={12} label="ロック" className="border-r border-[#55555b]" />
            <Btn icon="lanes" size={12} label="レーン" className="border-r border-[#55555b]" />
            <Btn icon="star" size={12} label="フリーズ" />
          </div>
        </div>
        <div className={"mt-[12px] divide-y divide-[#55555a] rounded-[2px] text-[#d0d0d4] " + FIELD}>
          <SliderRow icon="ramp" value="-57.7 dB" pos="left-[6px]" label="ボリューム" />
          <SliderRow icon="pan" value="C" pos="left-[44px]" label="パン" />
          <SliderRow icon="delay" value="0.00 ms" label="ディレイ" />
        </div>
        <div className={"mt-[10px] flex h-[19px] items-center rounded-[2px] pl-[3px] text-[11px] text-[#9a9a9e] " + FIELD}>
          <Icon name="preset" size={12} className="mr-[3px] text-[#dcdce0]" />
          <button type="button" className="flex-1 text-left whitespace-nowrap">トラックプリセット...</button>
          <Btn icon="down" size={9} label="プリセット" className="h-full w-[19px] border-l border-[#55555a] text-[#dcdce0]" />
        </div>
        <div className={"mt-[12px] flex h-[19px] rounded-[2px] text-[11px] text-[#d0d0d4] " + FIELD}>
          <Select value="エクステンションなし" label="エクステンション" className="w-full" pad="pl-[3px]" arrow={9} />
        </div>
        <div className="-mx-px mt-[13px]"><SectionHead title="ルーティング" icon="routing" /></div>
        <div className={"mt-[8px] divide-y divide-[#55555a] rounded-[2px] text-[10px] text-[#d0d0d4] " + FIELD}>
          <label className="flex h-[18px] items-center pl-[3px]"><Icon name="in" size={12} /><Select value="Stereo In" label="入力ルーティング" className="h-full flex-1" pad="pl-[4px]" arrow={9} /></label>
          <label className="flex h-[19px] items-center pl-[3px]"><Icon name="out" size={12} /><Select value="Drums" label="出力ルーティング" className="h-full flex-1" pad="pl-[4px]" arrow={9} /></label>
        </div>
        <div className="-mx-px mt-[12px]"><SectionHead title="トラックバージョン" icon="versions" open={false} /></div>
        <div className="-mx-px mt-[8px]"><SectionHead title="QC" icon="qc" /></div>
        <div className="mt-[8px] flex h-[19px] text-[12px] font-bold">
          <Btn icon="power" size={13} label="QC オン" className="w-[19px] rounded-[2px] bg-[#dcdce0] text-[#26262b]" />
          <Btn icon="learn" size={14} label="ラーン" className="ml-[3px] w-[19px] rounded-[2px] bg-[#424248]" />
          <Btn icon="trash" size={12} label="削除" className="ml-auto w-[19px] rounded-[2px] bg-[#424248]" />
          <div className="ml-auto flex rounded-[2px] bg-[#424248]">
            <Btn text="R" label="QC 読み込み" className="w-[19px]" /><Btn text="W" label="QC 書き込み" className="w-[19px]" />
          </div>
        </div>
        <div className="mt-[5px] h-[19px] rounded-[2px] border border-[#111114] bg-[#252328]" />
      </div>
      <div className="relative z-10 -mt-[2px] flex h-[22px] text-[12px] font-bold">
        <button type="button" className={"w-[84px] rounded-b-[5px] border-t-0 pt-[3px] text-white " + PANEL}>トラック</button>
        <button type="button" className="flex-1 pt-[2px] text-[#dcdce0]">エディター</button>
      </div>
    </section>
  );
}

/* ---------- track list and timeline ---------- */

type Track = {
  n: string; name: string; icon: string; bg: string; m: [number, number]; value?: string;
  region?: [string, string, string]; segs?: [number, number, number][];
};

const R_VO: [string, string, string] = ["#dc3c3c", "#f26a6a", "#6e0606"];
const R_EG: [string, string, string] = ["#a0ee00", "#c6ff4a", "#457400"];
const R_GR: [string, string, string] = ["#72e016", "#a4f860", "#226c06"];
const R_BA: [string, string, string] = ["#7684f0", "#98a4ff", "#1c2678"];
const R_PF: [string, string, string] = ["#c93ee8", "#e67cf8", "#5e0c78"];

const TRACKS: Track[] = [
  { n: "1", name: "HALion Sonic 01", icon: "keys", bg: "bg-[#7c7c7e]", m: [0, 0] },
  {
    n: "2", name: "VO_1", icon: "wave", bg: "bg-[#dc3c3c]", m: [10, 10], region: R_VO,
    segs: [[14, 52, 2.600], [55, 92, 2.600], [94, 158, 3], [162, 203, 2.600], [281, 302, 2.600], [306, 360, 2.600], [366, 423, 3], [427, 454, 2.600], [460, 548, 3], [567, 589, 2.600], [602, 743, 3.200], [745, 822, 3], [828, 835, 3], [838, 876, 3], [880, 1900, 3.200]],
  },
  { n: "3", name: "EG_Db_1", icon: "wave", bg: "bg-[#a0ee00]", m: [0, 0], region: R_EG, segs: [[202, 285, 2.200], [608, 622, 2], [625, 673, 2.200], [693, 1900, 1.600]] },
  { n: "4", name: "EG_DbLd_1", icon: "wave", bg: "bg-[#a0ee00]", m: [0, 0], region: R_EG, segs: [[201, 240, 1.800], [240, 283, 2.400]] },
  { n: "5", name: "EG_L_1", icon: "wave", bg: "bg-[#72e016]", m: [5, 1], region: R_GR, segs: [[281, 340, 2.700], [340, 389, 3.400], [389, 530, 2.700], [607, 679, 2.700], [692, 1900, 2.800]] },
  { n: "6", name: "EG_R_1", icon: "wave", bg: "bg-[#72e016]", m: [4, 5], region: R_GR, segs: [[311, 345, 2.700], [371, 403, 2.500], [406, 440, 2.300], [442, 479, 2.300], [481, 531, 2.300], [607, 680, 2.700], [692, 1900, 2.800]] },
  { n: "7", name: "BA_1", icon: "wave", bg: "bg-[#7684f0]", m: [7, 7], region: R_BA, segs: [[22, 101, 1.200], [101, 164, 1.800], [197, 529, 1.700], [608, 636, 2.200], [638, 679, 1.700], [693, 1900, 1.700]] },
  { n: "8", name: "PF_1", icon: "wave", bg: "bg-[#c93ee8]", m: [9, 11], region: R_PF, segs: [[22, 60, 0.9], [61, 162, 2], [202, 285, 2.200], [285, 400, 1.200], [402, 480, 2.200], [480, 549, 1.800], [566, 585, 1.500], [588, 602, 1.500], [607, 673, 2.300], [693, 1900, 2.300]] },
  { n: "9", name: "Drums", icon: "faders", bg: "bg-[#7c7c7e]", m: [13, 13], value: "-4.49" },
  { n: "10", name: "INTEGRA-7 Editor V...01", icon: "keys", bg: "bg-[#7c7c7e]", m: [0, 0] },
];

const noise = (i: number) => {
  const v = Math.sin(i * 12.9898) * 43758.5453;
  return v - Math.floor(v);
};

function wavePath(segs: [number, number, number][], y: number) {
  let d = "";
  for (const [a, b, amp] of segs) {
    let top = "";
    let bot = "";
    for (let x = a; x <= b; x += 2) {
      const h = Math.max(0.6, amp * (0.6 + 0.4 * noise(x + amp * 7)));
      top += `L${x} ${(y - h).toFixed(1)}`;
      bot = `L${x} ${(y + h).toFixed(1)}` + bot;
    }
    d += "M" + top.slice(1) + bot + "Z";
  }
  return d;
}

function MeterBars({ m }: { m: [number, number] }) {
  return (
    <div className="flex w-[11px] shrink-0 items-end justify-center gap-px bg-black pb-[4px]">
      {m.map((h, i) => (
        <i key={i} className="w-[3px] bg-[#66dfe8]" style={{ height: h }} />
      ))}
    </div>
  );
}

function MS({ className = "" }: { className?: string }) {
  return (
    <div className={"my-[2px] flex w-[50px] rounded-[2px] border border-[#18181d] bg-[#34343b] text-[13px] font-bold text-[#bfbfc3] " + className}>
      <Btn text="M" label="ミュート" className="flex-1" />
      <Btn text="S" label="ソロ" className="flex-1" />
    </div>
  );
}

function TrackList() {
  return (
    <div className="flex w-[358px] shrink-0 flex-col text-[#dcdce0]">
      <div className="flex h-[19px] items-stretch">
        <div className="flex rounded-[2px] bg-[#424248]">
          <Btn icon="plus" size={12} label="トラックを追加" className="w-[25px]" />
          <Btn icon="preset" size={15} label="プリセットから追加" className="w-[25px]" />
        </div>
        <div className="mr-[10px] ml-auto flex overflow-hidden rounded-[2px] bg-[#35353c]">
          <span className="w-[63px] pl-[3px] text-[11px] leading-[19px]">24 / 24</span>
          <Btn icon="visible" size={14} label="表示設定" className="w-[25px] border-x border-[#424248] bg-[#0c1315]" />
          <Btn icon="list" size={14} label="ゾーンを分割" className="w-[25px] bg-[#0c1315]" />
        </div>
        <Btn icon="search" size={14} label="トラックを検索" className="mr-[2px] w-[25px] rounded-[2px] bg-[#424248]" />
      </div>
      <div className="mt-[5px] h-px bg-[#77777b]" />
      <div className="h-[271px] overflow-hidden text-[13px]">
        <div className="flex h-[20px] border-b border-black">
          <div className="ml-px flex w-[40px] items-center bg-[#7c7c7e] pl-[3px] text-black"><Icon name="folder" size={16} /></div>
          <span className="flex flex-1 items-center pl-[10px] text-[12px]">入出力チャンネル</span>
          <MeterBars m={[0, 0]} />
        </div>
        <div className="flex h-[24px] border-b border-black">
          <div className="ml-px w-[11px] bg-[#0e0e06]" />
          <div className="flex w-[40px] items-center bg-[#7c7c7e] pl-[4px] text-black"><Icon name="out" size={14} /></div>
          <MS className="ml-[5px]" />
          <span className="flex flex-1 items-center pl-[9px]">Stereo Out</span>
          <span className="my-[2px] w-[60px] rounded-[2px] border border-[#111118] pr-[9px] text-right text-[11px] leading-[17px] text-[#aaaaae]">0.6</span>
          <MeterBars m={[14, 14]} />
        </div>
        {TRACKS.map((t) => (
          <div key={t.n} className="flex h-[24px] border-b border-black">
            <div className={"ml-px flex w-[40px] items-center pr-[5px] pl-[3px] text-black " + t.bg}>
              <Icon name={t.icon} size={15} />
              <span className="ml-auto text-[12px] text-black/80">{t.n}</span>
            </div>
            <MS className="ml-[5px]" />
            <span className="flex flex-1 items-center pl-[9px] whitespace-nowrap">{t.name}</span>
            {t.value ? (
              <span className="my-[2px] flex w-[70px] items-center justify-end gap-[6px] rounded-[2px] border border-[#111118] text-[11px] text-[#aaaaae]">
                {t.value}<Icon name="updown" size={11} />
              </span>
            ) : null}
            <MeterBars m={t.m} />
          </div>
        ))}
      </div>
      <div className="flex h-[15px] items-center text-[#8a8a8e]">
        <span className="ml-[7px] text-[11px]">-</span>
        <Icon name="down" size={11} className="mr-[10px] ml-auto" />
        <Icon name="gear" size={12} className="mr-[6px]" />
      </div>
    </div>
  );
}

const BARS = Array.from({ length: 48 }, (_, i) => i * 2 + 1);

function Timeline() {
  return (
    <div className="flex min-w-0 flex-1 flex-col">
      <div className="relative flex-1 overflow-hidden">
        <div className="flex h-[25px] w-full overflow-hidden bg-[#815eec]">
          {BARS.map((b) => (
            <div key={b} className="flex w-[40px] shrink-0 items-end border-l border-white/80 pb-[2px] pl-[4px] text-[11px] font-bold text-[#e8e4fa]">{b}</div>
          ))}
        </div>
        <span className="absolute top-0 left-0 h-0 w-0 border-t-[8px] border-r-[8px] border-t-white border-r-transparent" />
        <svg className="block h-[275px] w-full bg-[#2a323f]" aria-hidden="true">
          <defs>
            <pattern id="hatch" width="10" height="10" patternUnits="userSpaceOnUse">
              <path d="M0 0L10 10" stroke="#5560b0" strokeWidth="1.300" />
            </pattern>
          </defs>
          {[19, 43, 67, 259].map((y) => <rect key={y} y={y} width="100%" height="1" fill="#444d58" />)}
          {BARS.map((b) => <rect key={b} x={(b - 1) * 20} width="1" height="275" fill="#6a7380" />)}
          <rect y="26" width="100%" height="2" fill="#848c94" />
          <rect y="245" width="100%" height="2" fill="#848c94" />
          {TRACKS.map((t, i) =>
            t.region ? (
              <g key={t.n} transform={`translate(0 ${44 + i * 24})`}>
                <rect y="-1" width="100%" height="24" fill={t.region[2]} opacity=".55" />
                <rect x="0" y="1" width="100%" height="20" fill={t.region[0]} />
                {t.n === "7" ? <rect y="1" width="100%" height="20" fill="url(#hatch)" /> : null}
                <rect x="0" y="1" width="100%" height="1" fill={t.region[1]} />
                <rect x="0" y="20" width="100%" height="1" fill={t.region[1]} />
                <rect x="0" y="1" width="1" height="20" fill={t.region[1]} />
                {BARS.map((b) => <rect key={b} x={(b - 1) * 20} y="2" width="1" height="18" fill="#000" opacity=".18" />)}
                <path d={wavePath(t.segs ?? [], 7.5) + wavePath(t.segs ?? [], 16.5)} fill={t.region[2]} />
                <rect x="2" y="7" width="100%" height="1" fill="#000" opacity=".8" />
                <rect x="2" y="16" width="100%" height="1" fill="#000" opacity=".8" />
              </g>
            ) : null,
          )}
        </svg>
        <span className="absolute inset-y-0 left-[549px] w-[4px] border-x border-white bg-black" />
      </div>
      <div className="flex h-[12px] items-stretch text-[#dcdce0]">
        <div className="flex flex-1 items-center bg-[#424248] pr-[4px] pl-[3px]">
          <Chevron d="M10 3L5 8l5 5" />
          <span className="ml-[6px] h-[8px] w-[85px] rounded-[2px] bg-[#f0f0f0]" />
          <span className="ml-auto flex"><Chevron d="M6 3l5 5-5 5" /></span>
        </div>
        <Btn icon="down" size={9} label="ズームメニュー" className="mx-[3px] w-[12px] bg-[#424248]" />
        <div className="relative flex w-[84px] items-center justify-between bg-[#424248] px-[3px]">
          <Icon name="minus" size={9} /><i className="relative h-px w-[52px] bg-[#8a8a8e]"><b className="absolute -top-[4px] left-[15px] h-[8px] w-[8px] rounded-full bg-white" /></i><Icon name="plus" size={9} />
        </div>
      </div>
    </div>
  );
}

function Chevron({ d }: { d: string }) {
  return (
    <svg viewBox="0 0 16 16" width="10" height="10" aria-hidden="true"><path d={d} fill="none" stroke="#e6e6e8" strokeWidth="2.500" /></svg>
  );
}

function TrackPanel() {
  return (
    <section className={"flex h-[321px] shrink-0 rounded-[6px] pt-[3px] pr-[3px] pb-[2px] pl-[4px] " + PANEL}>
      <TrackList />
      <div className="mr-px ml-[2px] flex w-px flex-col justify-center bg-[#8a8a8e]" />
      <Timeline />
      <div className="ml-px flex w-[12px] shrink-0 flex-col items-stretch text-[#e6e6e8]">
        <Btn icon="down" size={10} label="ルーラーメニュー" className="h-[22px] rounded-[2px] bg-[#424248]" />
        <Btn icon="pencil" size={8} label="プレビュー" className="mt-[3px] h-[12px] rounded-[2px] bg-[#424248]" />
        <div className="mt-[3px] flex h-[48px] flex-col items-center rounded-[2px] bg-[#424248] pt-[5px]">
          <i className="h-[33px] w-px bg-[#8a8a8e]" /><i className="h-[8px] w-[8px] rounded-full bg-white" />
        </div>
        <div className="mt-[3px] flex h-[106px] flex-col items-center rounded-[2px] bg-[#424248] py-[3px]">
          <Chevron d="M3 10l5-5 5 5" />
          <i className="mt-[5px] h-[29px] w-[8px] rounded-[2px] bg-[#f0f0f0]" />
          <span className="mt-auto"><Chevron d="M3 6l5 5 5-5" /></span>
        </div>
        <Btn icon="down" size={9} label="縦ズームメニュー" className="mt-[3px] h-[12px] rounded-[2px] bg-[#424248]" />
        <div className="mt-[3px] flex flex-1 flex-col items-center rounded-[2px] bg-[#424248] py-[3px]">
          <Icon name="minus" size={8} /><i className="mt-[6px] h-[8px] w-[8px] rounded-full bg-white" /><i className="mb-[4px] w-px flex-1 bg-[#8a8a8e]" /><Icon name="plus" size={8} />
        </div>
        <div className="h-[12px]" />
      </div>
    </section>
  );
}

/* ---------- mix console ---------- */

type Strip = {
  n: number; name: string; top?: string; tone: "blue" | "pink" | "gray" | "orange"; icon?: string; pan: string;
  cap: string; pos: number; bars: [number, number]; v: [string, string]; rec?: boolean; bar?: boolean; sel?: boolean; ins?: boolean;
};

const STRIPS: Strip[] = [
  { n: 7, name: "BA_1", tone: "blue", pan: "CC", cap: "teal", pos: 62, bars: [35, 35], v: ["-7.48", "-10.9"] },
  { n: 8, name: "PF_1", tone: "pink", pan: "L18", cap: "teal", pos: 59, bars: [49, 56], v: ["-6.54", "-12.3"] },
  { n: 9, name: "Drums", tone: "gray", icon: "faders", pan: "C", cap: "blue", pos: 53, bars: [69, 70], v: ["-4.49", "-6.1"], rec: false },
  { n: 10, name: "INTEGRA-7 Editor Ver.2 01", top: "INTEGRA-7 .01", tone: "gray", icon: "keys", pan: "C", cap: "yellow", pos: 35, bars: [0, 0], v: ["0.00", "-oo"] },
  { n: 11, name: "DR_Kick", tone: "orange", pan: "CC", cap: "teal", pos: 46, bars: [79, 79], v: ["-2.50", "-6.5"] },
  { n: 12, name: "DR_Snare", tone: "orange", pan: "C", cap: "teal", pos: 47, bars: [42, 42], v: ["-2.76", "-8.9"] },
  { n: 13, name: "DR_HH", tone: "orange", pan: "C", cap: "teal", pos: 64, bars: [29, 17], v: ["-8.30", "-26.6"] },
  { n: 14, name: "DR_Toms", tone: "orange", pan: "C", cap: "teal", pos: 49, bars: [18, 28], v: ["-3.45", "-7.5"], bar: true, ins: true },
  { n: 15, name: "DR_RD", tone: "orange", pan: "C", cap: "teal", pos: 40, bars: [0, 0], v: ["-1.17", "-28.1"], bar: true },
  { n: 16, name: "DR_OH", tone: "orange", pan: "C", cap: "teal", pos: 49, bars: [58, 50], v: ["-3.31", "-9.4"], bar: true, ins: true },
  { n: 17, name: "DR_AmbRibbon", tone: "orange", pan: "C", cap: "teal", pos: 113, bars: [2, 2], v: ["-57.7", "-69.8"], bar: true, sel: true },
  { n: 18, name: "DR_AmbMid", tone: "orange", pan: "C", cap: "teal", pos: 95, bars: [13, 14], v: ["-24.2", "-35.8"], bar: true },
  { n: 19, name: "Reverb C", tone: "gray", icon: "FX", pan: "C", cap: "purple", pos: 29, bars: [20, 20], v: ["1.91", "-26.0"], rec: false, bar: true },
  { n: 20, name: "1/8 Delay L", tone: "gray", icon: "FX", pan: "L", cap: "purple", pos: 35, bars: [19, 0], v: ["0.00", "-27.9"], rec: false, bar: true, ins: true },
];

const TONE = {
  blue: "bg-[#7684f0] text-[#14184a] border-[#a0aaf6]",
  pink: "bg-[#c93ee8] text-[#3a0c46] border-[#e086f2]",
  gray: "bg-[#7c7c7e] text-[#f0f0f2] border-[#9c9c9e]",
  orange: "bg-[#d9822b] text-[#2e1604] border-[#eba868]",
};

function StripTop({ s }: { s: Strip }) {
  const head = s.sel ? "bg-[#9d9da0] border-[#3a3a3e]" : "bg-[#5f5f63] border-[#1a1a1e]";
  return (
    <div className={"w-[91px] shrink-0 border-r border-black " + (s.sel ? "bg-[#7b7b7e]" : "")}>
      <div className={"mx-px flex h-[18px] items-center border px-[3px] text-[11px] font-bold whitespace-nowrap " + TONE[s.tone]}>
        {s.top ?? s.name}
      </div>
      <div className="mt-[7px]"><Curve selected={s.sel} /></div>
      <button type="button" className={"mx-px mt-[6px] flex h-[18px] w-[88px] items-center justify-between border px-[3px] text-[11px] font-bold text-[#d8d8dc] " + head}>
        ルーティング<Icon name="routing" size={11} />
      </button>
      <div className={"mx-px mt-[8px] flex h-[8px] items-start overflow-hidden border border-b-0 text-[11px] font-bold text-[#d8d8dc] " + head}>
        <span className="h-[18px] flex-1 border-r border-[#1a1a1e] pt-[4px] pl-[4px]">Inserts</span>
        <span className={"flex w-[17px] justify-center pt-[4px] " + (s.ins ? "text-[#6ab4f0]" : "")}><Icon name="zoneB" size={10} /></span>
      </div>
    </div>
  );
}

function Pan({ pan, sel }: { pan: string; sel?: boolean }) {
  return (
    <div className={"relative mx-px flex h-[17px] items-end justify-around rounded-[4px] border-2 text-[9px] leading-[9px] font-bold text-[#ececec] " + (sel ? "border-[#262624] bg-[#30302e]" : "border-[#15150f] bg-[#20201c]")}>
      {pan === "CC" ? <><span>C</span><span>C</span></> : <span>{pan}</span>}
      {pan === "CC" && <i className="absolute top-0 left-1/2 h-[2px] w-[2px] bg-[#7ab8ea]" />}
      {pan === "C" && <i className="absolute top-0 left-1/2 h-[2px] w-[4px] -translate-x-1/2 bg-white" />}
      {pan === "L18" && <i className="absolute top-0 left-[30px] h-[2px] w-[9px] border-l-4 border-white bg-[#7ab8ea]" />}
      {pan === "L" && <i className="absolute top-0 left-0 h-[2px] w-[39px] border-l-4 border-white bg-[#7ab8ea]" />}
    </div>
  );
}

function StripBottom({ s }: { s: Strip }) {
  return (
    <div className={"w-[91px] shrink-0 border-r border-black pt-[3px] " + (s.sel ? "bg-[#7b7b7e]" : "")}>
      <div className="mx-[3px]">
        <MuteSolo selected={s.sel} />
        <div className="mt-[6px]"><Pan pan={s.pan} sel={s.sel} /></div>
        <div className="mx-px mt-[8px]"><Fader s={SMALL} cap={s.cap} pos={s.pos} bars={s.bars} label={s.name} selected={s.sel} /></div>
        <div className={"mt-[6px] grid h-[19px] grid-cols-2 rounded-[2px] border text-center text-[10px] leading-[17px] " + (s.sel ? "border-[#4c4c50] bg-[#8c8c8f] text-[#e0e0e2]" : "border-[#141419] bg-[#3f3f46] text-[#b4b4b8]")}>
          <span className={s.sel ? "border-r border-[#4c4c50] bg-[#78787b]" : "bg-[#212129]"}>{s.v[0]}</span><span>{s.v[1]}</span>
        </div>
        <div className="mt-[5px]"><ReadWrite selected={s.sel} on={s.sel} rec={s.rec} /></div>
      </div>
      <div className={"mt-[2px] h-[2px] " + (s.bar ? "bg-[#dcdce8]" : "")} />
      <div className="flex h-[22px] items-center pr-[10px] pb-[2px] pl-[4px] text-[12px] text-[#bfbfc3]">
        {s.icon === "FX" ? <b className="text-[11px]">FX</b> : <Icon name={s.icon ?? "wave"} size={12} />}
        <Icon name="stereo" size={11} className="ml-[10px]" />
        <span className="ml-auto">{s.n}</span>
      </div>
      <div className={"flex h-[34px] flex-col justify-center border-r border-black/30 px-[4px] " + (s.n === 10 ? "pb-[5px] text-[11px] leading-[14px] " : s.sel ? "text-[11px] " : "pb-[5px] text-[13px] ") + (s.sel ? "border-b-[5px] border-b-[#d9822b] bg-[#ececec] text-[#1a1a1a]" : TONE[s.tone])}>
        {s.name}
      </div>
    </div>
  );
}

function Mixer() {
  return (
    <section className="mt-[6px] flex flex-1 flex-col">
      <div className={"flex flex-1 flex-col rounded-[6px] px-[7px] pt-[6px] " + PANEL}>
        <div className="flex items-center text-[13px] text-[#dcdce0]">
          <Group><Btn icon="undo" size={14} label="元に戻す" className="w-[25px]" /><Btn icon="redo" size={14} label="再実行" className="w-[25px]" /></Group>
          <Group className="ml-[5px]"><Btn icon="camera" size={16} label="スナップショット" className="w-[25px]" /><Drop label="スナップショットメニュー" /></Group>
          <div className="w-[18px] shrink-0" />
          <Group className="ml-auto"><Btn icon="search" size={16} label="チャンネルを検索" className="w-[25px]" /></Group>
          <Group className="ml-[5px]"><Btn icon="list" size={14} label="ゾーン" className="w-[25px] bg-[#0c1315]" /></Group>
          <Group className="ml-[5px]">
            <Btn text="リンク" label="リンク" className="w-[51px] text-[12px]" /><Drop label="リンクメニュー" /><Btn icon="e" size={14} label="リンク設定" className="w-[25px] text-[#77777b]" />
          </Group>
          <Group className="ml-[9px]"><Btn text="Sus" label="Sus" className="w-[50px]" /><Btn text="Abs" label="Abs" className="w-[52px]" /></Group>
          <Group className="ml-[8px]"><Btn text="Q-Link" label="Q-Link" className="w-[62px]" /></Group>
          <Group className="mr-auto ml-[6px]">
            <Btn icon="widen" size={13} label="幅を狭く" className="w-[26px]" /><Btn icon="narrow" size={13} label="幅を広く" className="w-[26px]" />
            <span className="w-[36px] bg-[#0c1315] text-center leading-[25px]">14</span>
            <Btn icon="hourglass" size={12} label="高さ" className="w-[26px]" /><Btn icon="updown" size={16} label="表示サイズ" className="w-[25px]" />
          </Group>
          <Group><Btn icon="gear" size={15} label="設定" className="w-[25px] bg-[#0c1315]" /></Group>
          <Group className="ml-[5px]"><Btn icon="panelgear" size={15} label="レイアウト" className="w-[25px] bg-[#0c1315]" /><Btn icon="popout" size={14} label="別ウィンドウ" className="w-[25px]" /></Group>
        </div>
        <div className="mt-[4px] h-px bg-[#55555b]" />
        <div className="mt-[4px] flex gap-[2px]">
          <div className="min-w-0 flex-1 overflow-hidden">
            <div className="flex">{STRIPS.map((s) => <StripTop key={s.n} s={s} />)}</div>
            <div className="flex h-[2px] justify-center bg-[#77777b]">
              <div className="flex gap-[2px] bg-[#2b2b33] px-[2px]">
                <i className="w-[4px] bg-white" /><i className="w-[4px] bg-white" /><i className="w-[4px] bg-white" /><i className="w-[4px] bg-white" />
              </div>
            </div>
            <div className="flex">{STRIPS.map((s) => <StripBottom key={s.n} s={s} />)}</div>
          </div>
          <div className="flex w-[12px] flex-col items-center bg-[#424248] py-[3px]">
            <Chevron d="M3 10l5-5 5 5" />
            <i className="mt-[5px] h-[109px] w-[8px] rounded-[2px] bg-[#f0f0f0]" />
            <span className="mt-auto"><Chevron d="M3 6l5 5 5-5" /></span>
          </div>
        </div>
        <div className="mt-[2px] mr-[14px] flex h-[12px] items-center bg-[#424248] pr-[4px] pl-[3px]">
          <Chevron d="M10 3L5 8l5 5" />
          <div className="mx-[6px] flex flex-1"><div className="w-[30.5%]" /><div className="h-[8px] w-[61%] rounded-[2px] bg-[#f0f0f0]" /></div>
          <Chevron d="M6 3l5 5-5 5" />
        </div>
      </div>
      <div className="relative z-10 -mt-[2px] flex h-[20px] shrink-0 items-stretch text-[12px] font-bold text-[#dcdce0]">
        <Btn icon="cross" size={12} label="ゾーンを閉じる" className="w-[18px]" />
        <button type="button" className={"w-[110px] rounded-b-[3px] border-t-0 pt-[2px] text-white " + PANEL}>MixConsole</button>
        <button type="button" className="ml-[19px] w-[60px] pt-[2px]">エディター</button>
        <button type="button" className="ml-[39px] w-[134px] pt-[2px] whitespace-nowrap">サンプラーコントロール</button>
        <button type="button" className="ml-[38px] w-[80px] pt-[2px] whitespace-nowrap">MIDI Remote</button>
        <button type="button" className="ml-[36px] w-[74px] pt-[2px] whitespace-nowrap">コードパッド</button>
        <button type="button" className="ml-[37px] w-[90px] pt-[2px] whitespace-nowrap">Drum Machine</button>
        <button type="button" className="ml-[35px] w-[86px] pt-[2px] whitespace-nowrap">モジュレーター</button>
      </div>
    </section>
  );
}

/* ---------- right: meter ---------- */

const DB: [number, string][] = [
  [3, "0"], [85, "5"], [167, "10"], [249, "15"], [331, "20"], [400, "25"], [461, "30"], [515, "35"], [561, "40"], [626, "50"], [653, "60"],
];
const MINOR = [...[0, 1, 2, 3].flatMap((k) => [1, 2, 3, 4].map((j) => 3 + k * 82 + Math.round(j * 16.4))), 598];

function MeterScale() {
  return (
    <svg viewBox="0 0 160 690" width="160" height="690" className="mx-auto block" role="img" aria-label="マスターメーター">
      <defs>
        <linearGradient id="master" gradientUnits="userSpaceOnUse" x1="0" y1="218" x2="0" y2="681">
          <stop offset="0" stopColor="#68f6b4" />
          <stop offset=".25" stopColor="#66eec8" />
          <stop offset=".3" stopColor="#68e6dc" />
          <stop offset="1" stopColor="#62d4ff" />
        </linearGradient>
      </defs>
      <g transform="translate(0 8)">
        <rect x="36.500" y="0.500" width="87" height="675" fill="#26262e" stroke="#8a8a8c" />
        <rect x="39" y="2" width="82" height="672" fill="#000" />
        <rect x="39" y="45" width="40" height="1" fill="#77776c" />
        <rect x="81" y="31" width="40" height="1" fill="#77776c" />
        <rect x="39" y="181" width="40" height="1" fill="#7a88e8" />
        <rect x="81" y="175" width="40" height="1" fill="#7a88e8" />
        <rect x="39" y="219" width="40" height="454" fill="url(#master)" />
        <rect x="81" y="214" width="40" height="459" fill="url(#master)" />
        {DB.map(([y, t]) => (
          <g key={y}>
            {y > 219 ? <rect x="39" y={y} width="82" height="1" fill="#2a9490" opacity=".5" /> : null}
            <rect x="26" y={y} width="8" height="1" fill="#e0e0e4" />
            <rect x="126" y={y} width="9" height="1" fill="#e0e0e4" />
            <text x="16" y={y + 5} textAnchor="middle" fontSize="14" fontWeight="700" fill="#c4c4c8">{t}</text>
            <text x="145" y={y + 5} textAnchor="middle" fontSize="14" fontWeight="700" fill="#c4c4c8">{t}</text>
          </g>
        ))}
        {MINOR.map((y) => (
          <g key={y}>
            <rect x="30" y={y} width="4" height="1" fill="#e0e0e4" />
            <rect x="126" y={y} width="5" height="1" fill="#e0e0e4" />
          </g>
        ))}
        <rect x="79" y="214" width="2" height="460" fill="#000" />
        <rect x="39" y="348" width="40" height="1" fill="#1c1c70" />
        <rect x="81" y="349" width="40" height="1" fill="#4c3c9c" />
      </g>
    </svg>
  );
}

function MeterPanel() {
  return (
    <section className="flex w-[228px] shrink-0 flex-col text-[#dcdce0]">
      <div className="relative z-10 -mb-[2px] flex h-[23px] items-stretch text-[12px] font-bold">
        <button type="button" className="w-[46px] pb-[2px]">VSTi</button>
        <button type="button" className="w-[72px] pb-[2px]">メディ.</button>
        <button type="button" className="flex-1 pr-[3px] pb-[2px]">CR</button>
        <button type="button" className={"w-[67px] rounded-t-[4px] border-b-0 pb-[3px] text-white " + PANEL}>メータ.</button>
      </div>
      <div className={"flex flex-1 flex-col rounded-[6px] rounded-tr-none rounded-bl-none px-[8px] pt-[11px] " + PANEL}>
        <div className="flex text-[12px]">
          <Group className="flex-1">
            <Select value="Digit." label="スケール" className="flex-1" />
            <Select value="-18 ." label="オフセット" className="flex-1 border-l border-[#55555a] text-[#66666a]" />
          </Group>
          <Group className="ml-[3px]"><Btn icon="gear" size={14} label="メーター設定" className="w-[25px]" /><Btn icon="rewind" size={15} label="リセット" className="w-[25px]" /></Group>
          <Group className="ml-[3px]"><Btn icon="stereoArrows" size={22} label="チャンネル" className="w-[25px]" /></Group>
        </div>
        <div className="mt-[10px]"><MeterScale /></div>
        <div className="mt-[16px] flex h-[60px] items-center justify-center gap-[14px] rounded-[5px] border-2 border-[#1a1420] bg-[#1e1722] pl-[6px] text-center text-[12px]">
          <div><div>最大RMS</div><div className="mt-[13px]">-16.3</div></div>
          <div><div>最大ピーク</div><div className="mt-[13px]">-1.7</div></div>
        </div>
      </div>
      <div className="relative z-10 -mt-[2px] flex h-[22px] shrink-0 items-stretch text-[12px] font-bold">
        <button type="button" className={"w-[88px] rounded-b-[5px] border-t-0 pt-[3px] text-white " + PANEL}>マスター</button>
        <button type="button" className="w-[98px] pt-[2px]">ラウドネス</button>
      </div>
    </section>
  );
}

/* ---------- transport ---------- */

function Position({ parts }: { parts: string[] }) {
  return (
    <div className="flex flex-1 items-center justify-end bg-[#0c1315] pr-[6px] text-[16px] text-[#d6d6da]">
      {parts.map((p, i) => (
        <span key={i} className={i === 3 ? "w-[27px] text-right" : i === 0 ? "text-right" : "w-[22px] text-right"}>{p}</span>
      ))}
    </div>
  );
}

function Transport() {
  return (
    <footer className="flex h-[40px] shrink-0 items-center bg-[#2b2b33] pl-[5px] text-[#dcdce0]">
      <Group><Btn icon="delay" size={17} label="ディレイ補正" className="w-[24px]" /></Group>
      <Group className="ml-[5px]"><Btn icon="rec" size={15} label="録音モード" className="w-[25px] bg-[#0c1315]" /><Drop label="録音メニュー" className="w-[19px]" /></Group>
      <Grip />
      <Group><Btn icon="wave" size={18} label="オーディオ録音" className="w-[25px] bg-[#0c1315]" /><Drop label="オーディオ録音メニュー" className="w-[19px]" /></Group>
      <Grip />
      <Group><Btn icon="midi" size={16} label="MIDI 録音" className="w-[25px] bg-[#0c1315]" /><Drop label="MIDI 録音メニュー" className="w-[19px]" /></Group>
      <Grip />
      <Group><Btn text="AQ" label="自動クオンタイズ" className="w-[38px] text-[14px] text-[#a8a8ac]" /></Group>
      <div className="flex flex-1 items-center justify-center pl-[18px]">
        <Group className="w-[150px]"><Btn icon="locL" size={14} label="左ロケーター" className="w-[25px]" /><Position parts={["1.", "1.", "1.", "0"]} /></Group>
        <Group className="ml-[10px] w-[150px]"><Btn icon="locR" size={14} label="右ロケーター" className="w-[25px]" /><Position parts={["68.", "4.", "1.", "96"]} /></Group>
        <div className="ml-[6px] flex h-[31px] shrink-0 items-stretch overflow-hidden rounded-[3px] border-2 border-[#b4b4b8] bg-[#66666a]">
          <Btn icon="toStart" size={16} label="先頭へ" className="w-[38px]" /><Btn icon="toEnd" size={16} label="次へ" className="w-[37px]" />
          <Btn icon="back" size={17} label="早戻し" className="w-[38px]" /><Btn icon="fwd" size={17} label="早送り" className="w-[37px]" />
          <Btn icon="cycle" size={17} label="サイクル" className="w-[50px] bg-[#9478ec] text-[#221250]" />
          <Btn icon="stop" size={15} label="停止" className="w-[50px]" />
          <Btn icon="play" size={16} label="再生" className="w-[50px] bg-[#5ee000] text-[#10380a]" />
          <Btn icon="record" size={15} label="録音" className="w-[49px]" />
        </div>
        <Grip />
        <Group><Btn icon="punch" size={15} label="パンチイン" className="w-[38px]" /></Group>
        <Group className="ml-[5px] w-[150px]"><Btn icon="note" size={16} label="時間形式" className="w-[25px] border-r border-[#44444a] bg-[#0c1315]" /><Position parts={["28.", "2.", "4.", "6"]} /></Group>
        <Grip />
        <Group>
          <Btn icon="tempo" size={15} label="テンポトラック" className="w-[25px] bg-[#dcdce0] text-[#1b1b1f]" />
          <span className="flex w-[82px] items-center justify-center gap-[9px] bg-[#0c1315] text-[13px]">170.000<Icon name="updown" size={14} /></span>
          <Btn text="Tap" label="タップテンポ" className="w-[50px] text-[13px]" /><Drop label="テンポメニュー" />
        </Group>
        <Grip />
      </div>
      <Group><Btn icon="metronome" size={14} label="メトロノーム" className="w-[25px]" /><Btn icon="gear" size={12} label="クリック設定" className="w-[20px]" /></Group>
      <Grip />
      <div className="flex h-[25px] w-[89px] items-end rounded-[3px] border border-[#57575d] bg-[#0c1315]">
        <i className="h-full w-[25px] border-r border-[#44444a]" />
        <i className="ml-[35px] h-[14px] w-[7px] bg-[linear-gradient(#62eeb4,#62d8ff)]" /><i className="ml-px h-[14px] w-[7px] bg-[linear-gradient(#62eeb4,#62d8ff)]" />
      </div>
      <Grip />
      <Group>
        <Btn icon="lock" size={14} label="パンチロック" className="w-[25px] bg-[#dcdce0] text-[#1b1b1f]" />
        <Btn icon="punchIn" size={15} label="パンチインをオン" className="w-[25px]" /><Btn icon="punchOut" size={15} label="パンチアウトをオン" className="w-[25px]" />
      </Group>
      <Grip />
    </footer>
  );
}

export default function App() {
  return (
    <div className="flex min-h-screen w-full min-w-[1600px] flex-col bg-[#1d3d5e] font-['Liberation_Sans','Noto_Sans_CJK_JP',sans-serif] leading-none">
      <MenuBar />
      <div className="mt-px flex flex-1 flex-col overflow-hidden rounded-[9px] bg-black">
        <TitleBar />
        <Toolbar />
        <StatusLine />
        <div className="flex h-[37px] items-center justify-center bg-[#171d1e] pl-[8px] text-[11px] font-medium text-[#dcdce0]">
          選択オブジェクトなし
        </div>
        <main className="flex flex-1 bg-black px-[5px] pt-[8px] pb-[5px]">
          <ChannelPanel />
          <div className="w-[6px] shrink-0" />
          <Inspector />
          <div className="w-[4px] shrink-0" />
          <div className="flex min-w-0 flex-1 flex-col"><TrackPanel /><Mixer /></div>
          <div className="w-[6px] shrink-0" />
          <MeterPanel />
        </main>
        <Transport />
      </div>
    </div>
  );
}
